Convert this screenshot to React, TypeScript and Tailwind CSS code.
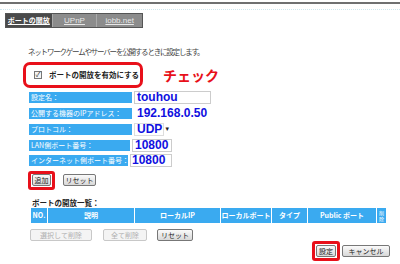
import React from 'react';

const jp = { fontFamily: '"Noto Sans CJK JP", "Noto Sans", sans-serif' };
const val = { fontFamily: '"Liberation Sans", Arial, sans-serif' };

const Btn: React.FC<{ label: string; w: string; disabled?: boolean }> = ({ label, w, disabled }) => (
  <div
    className={`${w} h-[12px] flex items-center justify-center text-[7px] leading-none whitespace-nowrap rounded-[2px] border ${
      disabled
        ? 'border-[#c8c8c8] text-[#b0b0b0] bg-[#f4f4f4]'
        : 'border-[#777] text-[#222] bg-gradient-to-b from-[#fafafa] to-[#d8d8d8]'
    }`}
  >
    {label}
  </div>
);

const Row: React.FC<{ label: string; lw: string; children: React.ReactNode; mt: string }> = ({ label, lw, children, mt }) => (
  <div className={`flex items-center ml-[29px] ${mt}`}>
    <div className={`${lw} h-[11px] bg-[#3aaaf0] text-white text-[7px] leading-[11px] pl-[2px] whitespace-nowrap overflow-hidden`}>
      {label}
    </div>
    <div className="ml-[2px] flex items-center">{children}</div>
  </div>
);

export default function App() {
  const cols = [
    { t: 'NO.', w: 'w-[16px]' },
    { t: '説明', w: 'w-[86px]' },
    { t: 'ローカルIP', w: 'w-[85px]' },
    { t: 'ローカルポート', w: 'w-[50px]' },
    { t: 'タイプ', w: 'w-[35px]' },
    { t: 'Public ポート', w: 'w-[68px]' },
  ];

  return (
    <div className="w-[400px] h-[264px] bg-white overflow-hidden flex flex-col" style={jp}>
      <div className="h-[2px] bg-[#707070] mt-[2px]" />
      <div className="border-t border-dotted border-[#cfe6ee] mt-[5px]" />

      {/* tabs */}
      <div className="flex ml-[5px] mt-[3px] h-[15px] border border-[#555] w-[138px]">
        <div className="w-[46px] bg-[#4a4a4a] text-white text-[7px] font-bold underline whitespace-nowrap flex items-center justify-center">
          ポートの開放
        </div>
        <div className="w-[45px] bg-[#8c8c8c] border-l border-[#aaa] text-[#e8e8e8] text-[8px] underline flex items-center justify-center" style={val}>
          UPnP
        </div>
        <div className="w-[46px] bg-[#8c8c8c] border-l border-[#aaa] text-[#e8e8e8] text-[8px] underline flex items-center justify-center" style={val}>
          iobb.net
        </div>
      </div>

      <div className="ml-[28px] mt-[20px] text-[7.5px] tracking-[-1.2px] leading-none text-[#444] whitespace-nowrap">
        ネットワークゲームやサーバーを公開するときに設定します。
      </div>

      {/* enable checkbox */}
      <div className="flex items-center mt-[6px]">
        <div className="ml-[23px] w-[120px] h-[26px] border-[3px] border-[#e8101a] rounded-[7px] flex items-center pl-[8px]">
          <div className="w-[8px] h-[8px] border border-[#777] bg-[#f4f4f4] flex items-center justify-center text-[7px] leading-none text-[#333]">
            ✓
          </div>
          <span className="ml-[7px] text-[7.5px] font-bold text-[#222] whitespace-nowrap">ポートの開放を有効にする</span>
        </div>
        <span className="ml-[20px] text-[14px] font-bold text-[#e8101a] leading-none">チェック</span>
      </div>

      {/* form rows */}
      <Row label="設定名：" lw="w-[103px]" mt="mt-[3px]">
        <div className="w-[77px] h-[13px] border border-[#ccc] flex items-center pl-[2px] text-[12px] font-bold text-[#1010e0]" style={val}>
          touhou
        </div>
      </Row>
      <Row label="公開する機器のIPアドレス：" lw="w-[103px]" mt="mt-[3px]">
        <div className="w-[75px] h-[13px] flex items-center pl-[3px] text-[12px] font-bold text-[#1010e0]" style={val}>
          192.168.0.50
        </div>
      </Row>
      <Row label="プロトコル：" lw="w-[103px]" mt="mt-[3px]">
        <div className="w-[30px] h-[13px] border border-[#ddd] flex items-center pl-[2px] text-[12px] font-bold text-[#1010e0]" style={val}>
          UDP<span className="ml-[2px] text-[6px] text-[#222]">▼</span>
        </div>
      </Row>
      <Row label="LAN側ポート番号：" lw="w-[101px]" mt="mt-[3px]">
        <div className="w-[40px] h-[13px] border border-[#ccc] flex items-center pl-[2px] text-[12px] font-bold text-[#1010e0]" style={val}>
          10800
        </div>
      </Row>
      <Row label="インターネット側ポート番号：" lw="w-[99px]" mt="mt-[2px]">
        <div className="w-[42px] h-[13px] border border-[#ccc] flex items-center pl-[1px] text-[12px] font-bold text-[#1010e0]" style={val}>
          10800
        </div>
      </Row>

      {/* add / reset */}
      <div className="flex items-center ml-[28px] mt-[4px]">
        <div className="w-[27px] h-[19px] border-[3px] border-[#e8101a] rounded-[3px] flex items-center justify-center">
          <Btn label="追加" w="w-[19px]" />
        </div>
        <div className="ml-[8px]">
          <Btn label="リセット" w="w-[33px]" />
        </div>
      </div>

      <div className="ml-[32px] mt-[9px] text-[7.5px] font-bold leading-none text-[#222]">ポートの開放一覧：</div>

      {/* table header */}
      <div className="flex ml-[31px] mt-[2px] h-[15px] gap-[1px]">
        {cols.map((c) => (
          <div key={c.t} className={`${c.w} bg-[#3aaaf0] text-white text-[7px] font-bold flex items-center justify-center whitespace-nowrap`}>
            {c.t}
          </div>
        ))}
        <div className="w-[9px] bg-[#3aaaf0] text-white text-[5px] leading-[6px] flex flex-col items-center justify-center">
          <span>削</span>
          <span>除</span>
        </div>
      </div>

      {/* bottom buttons */}
      <div className="flex items-center ml-[30px] mt-[6px]">
        <Btn label="選択して削除" w="w-[62px]" disabled />
        <div className="ml-[11px]">
          <Btn label="全て削除" w="w-[44px]" disabled />
        </div>
        <div className="ml-[10px]">
          <Btn label="リセット" w="w-[36px]" />
        </div>
      </div>

      <div className="flex items-center ml-[312px] mt-[0px]">
        <div className="w-[28px] h-[20px] border-[3px] border-[#e8101a] rounded-[3px] flex items-center justify-center">
          <Btn label="設定" w="w-[20px]" />
        </div>
        <div className="ml-[2px]">
          <Btn label="キャンセル" w="w-[48px]" />
        </div>
      </div>
    </div>
  );
}
